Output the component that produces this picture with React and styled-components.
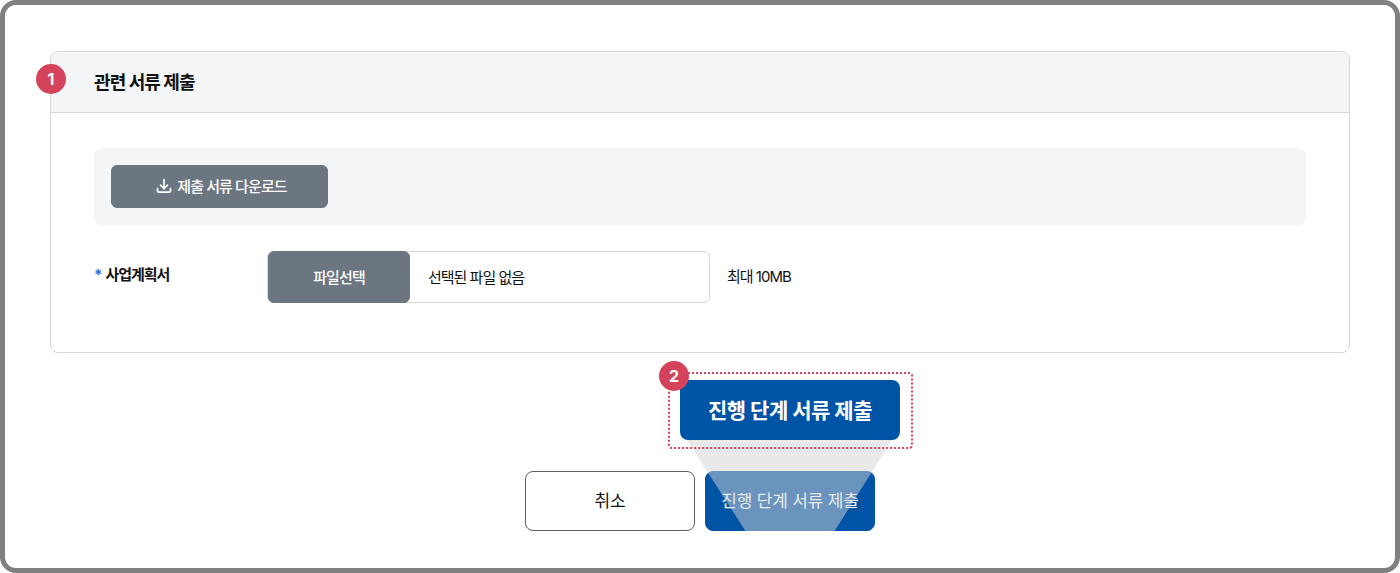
import React from 'react'
import styled, { createGlobalStyle } from 'styled-components'

const GlobalStyle = createGlobalStyle`
html, body { margin: 0; padding: 0; background: #fff; }
* { box-sizing: border-box; }
body { font-family: "Inter", "Noto Sans CJK KR", sans-serif; color: #111; }
`

const Frame = styled.div`
position: relative;
width: 1400px;
height: 573px;
overflow: hidden;
background: #fff;
border: 5px solid #808080;
border-radius: 16px;
padding: 46px 45px 0;
`
const Card = styled.section`
height: 302px;
border: 1px solid #d6d7d9;
border-radius: 8px;
overflow: hidden;
`
const CardHeader = styled.header`
height: 61px;
display: flex;
align-items: center;
padding: 0 0 2px 43px;
background: #f4f5f7;
border-bottom: 1px solid #d6d7d9;
`
const CardTitle = styled.h2`
margin: 0;
font-size: 18px;
font-weight: 700;
letter-spacing: -0.9px;
`
const CardBody = styled.div`
padding: 35px 43px 0;
`
const DownloadPanel = styled.div`
height: 77px;
display: flex;
align-items: center;
padding-left: 17px;
background: #f4f5f7;
border-radius: 8px;
`
const GrayButton = styled.button`
display: flex;
align-items: center;
justify-content: center;
border: 1px solid #6c7680;
background: #6c7680;
color: #fff;
font-family: inherit;
font-size: 15px;
font-weight: 500;
letter-spacing: -0.9px;
padding: 0 0 2px;
`
const DownloadButton = styled(GrayButton)`
width: 217px;
height: 43px;
gap: 5px;
padding-left: 4px;
border-radius: 6px;
`
const FileRow = styled.div`
display: flex;
align-items: flex-start;
margin-top: 26px;
`
const FieldLabel = styled.label`
width: 173px;
padding-top: 14px;
font-size: 15px;
font-weight: 700;
letter-spacing: -1px;
line-height: 20px;
`
const Required = styled.span`
color: #2f6fdc;
margin-right: 4px;
`
const FileInput = styled.div`
width: 443px;
height: 52px;
display: flex;
align-items: center;
border: 1px solid #d6d7d9;
border-radius: 6px;
`
const FileButton = styled(GrayButton)`
width: 142px;
height: 52px;
border-radius: 6px;
`
const FileName = styled.span`
margin: 0 0 1px 18px;
font-size: 15px;
letter-spacing: -1px;
`
const FileHint = styled.span`
margin-left: 17px;
line-height: 51px;
font-size: 15px;
letter-spacing: -1px;
`
const Actions = styled.div`
display: flex;
justify-content: center;
gap: 10px;
margin-top: 118px;
`
const ActionButton = styled.button`
width: 170px;
height: 60px;
border-radius: 8px;
border: 1px solid ${p => (p.$primary ? '#0054a6' : '#5b6067')};
background: ${p => (p.$primary ? '#0054a6' : '#fff')};
color: ${p => (p.$primary ? '#fff' : '#111')};
font-family: inherit;
font-size: 17px;
font-weight: 400;
letter-spacing: -0.2px;
padding: 0 0 3px;
`
/* annotation layer: everything below sits on top of the screen */
const Spotlight = styled.div`
position: absolute;
left: 682px;
top: 435px;
width: 205px;
height: 91px;
background: rgba(212, 212, 212, 0.5);
clip-path: polygon(0 0, 100% 0, 72% 100%, 28.5% 100%);
`
const CalloutBox = styled.div`
position: absolute;
left: 663px;
top: 367px;
width: 245px;
height: 77px;
border: 2px dotted #d5435b;
border-radius: 4px;
`
const CalloutButton = styled.div`
position: absolute;
left: 675px;
top: 375px;
width: 220px;
height: 60px;
display: flex;
align-items: center;
justify-content: center;
padding-bottom: 3px;
border-radius: 8px;
background: #0054a6;
color: #fff;
font-size: 21px;
font-weight: 700;
letter-spacing: -0.5px;
`
const Badge = styled.span`
position: absolute;
left: ${p => p.$x}px;
top: ${p => p.$y}px;
width: 30px;
height: 30px;
display: flex;
align-items: center;
justify-content: center;
border-radius: 50%;
background: #d5435b;
color: #fff;
font-size: 16px;
font-weight: 700;
`

const DownloadIcon = () => (
  <svg width="16" height="16" viewBox="0 0 16 16" fill="none" stroke="#fff" strokeWidth="1.7" strokeLinecap="round" strokeLinejoin="round">
    <path d="M8 1.5v9" />
    <path d="M4.5 7.2 8 10.6l3.5-3.4" />
    <path d="M1.5 10.5v2.2c0 .9.6 1.5 1.5 1.5h10c.9 0 1.5-.6 1.5-1.5v-2.2" />
  </svg>
)

const App = () => {
  return (
    <Frame>
      <GlobalStyle />
      <Card>
        <CardHeader>
          <CardTitle>관련 서류 제출</CardTitle>
        </CardHeader>
        <CardBody>
          <DownloadPanel>
            <DownloadButton>
              <DownloadIcon />
              제출 서류 다운로드
            </DownloadButton>
          </DownloadPanel>
          <FileRow>
            <FieldLabel><Required>*</Required>사업계획서</FieldLabel>
            <FileInput>
              <FileButton>파일선택</FileButton>
              <FileName>선택된 파일 없음</FileName>
            </FileInput>
            <FileHint>최대 10MB</FileHint>
          </FileRow>
        </CardBody>
      </Card>
      <Actions>
        <ActionButton>취소</ActionButton>
        <ActionButton $primary>진행 단계 서류 제출</ActionButton>
      </Actions>
      <Spotlight />
      <CalloutBox />
      <CalloutButton>진행 단계 서류 제출</CalloutButton>
      <Badge $x={31} $y={59}>1</Badge>
      <Badge $x={654} $y={356}>2</Badge>
    </Frame>
  )
}

export default App
